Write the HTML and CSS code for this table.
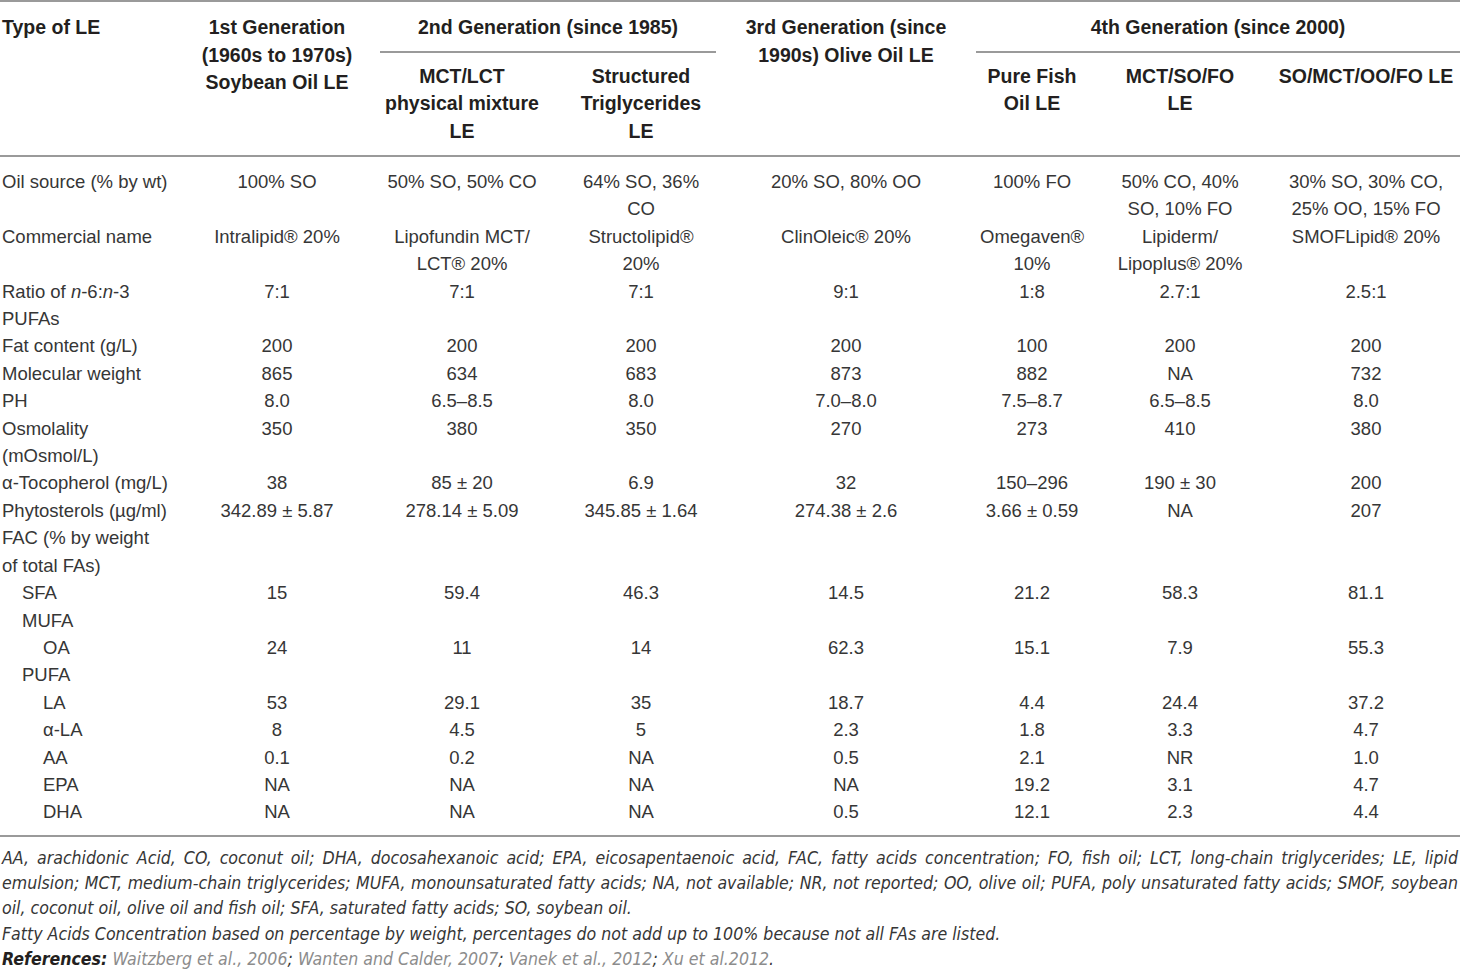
FILE: index.html
```html
<!DOCTYPE html>
<html lang="en">
<head>
<meta charset="utf-8">
<title>Lipid emulsions</title>
<link rel="stylesheet" href="styles.css">
</head>
<body>
<table class="le">
  <colgroup>
    <col class="c1"><col class="c2"><col class="c3"><col class="c4"><col class="c5"><col class="c6"><col class="c7"><col class="c8">
  </colgroup>
  <thead>
    <tr class="h1">
      <th class="lbl span" rowspan="2">Type of LE</th>
      <th class="span" rowspan="2">1st Generation<br>(1960s to 1970s)<br>Soybean Oil LE</th>
      <th class="grp" colspan="2"><div class="grp-label g2">2nd Generation (since 1985)</div></th>
      <th class="span" rowspan="2">3rd Generation (since<br>1990s) Olive Oil LE</th>
      <th class="grp" colspan="3"><div class="grp-label g4">4th Generation (since 2000)</div></th>
    </tr>
    <tr class="h2">
      <th>MCT/LCT<br>physical mixture<br>LE</th>
      <th>Structured<br>Triglycerides<br>LE</th>
      <th>Pure Fish<br>Oil LE</th>
      <th>MCT/SO/FO<br>LE</th>
      <th>SO/MCT/OO/FO LE</th>
    </tr>
  </thead>
  <tbody>
    <tr><td class="lbl">Oil source (% by wt)</td><td>100% SO</td><td>50% SO, 50% CO</td><td>64% SO, 36%<br>CO</td><td>20% SO, 80% OO</td><td>100% FO</td><td>50% CO, 40%<br>SO, 10% FO</td><td>30% SO, 30% CO,<br>25% OO, 15% FO</td></tr>
    <tr><td class="lbl">Commercial name</td><td>Intralipid® 20%</td><td>Lipofundin MCT/<br>LCT® 20%</td><td>Structolipid®<br>20%</td><td>ClinOleic® 20%</td><td>Omegaven®<br>10%</td><td>Lipiderm/<br>Lipoplus® 20%</td><td>SMOFLipid® 20%</td></tr>
    <tr><td class="lbl">Ratio of <i>n</i>-6:<i>n</i>-3<br>PUFAs</td><td>7:1</td><td>7:1</td><td>7:1</td><td>9:1</td><td>1:8</td><td>2.7:1</td><td>2.5:1</td></tr>
    <tr><td class="lbl">Fat content (g/L)</td><td>200</td><td>200</td><td>200</td><td>200</td><td>100</td><td>200</td><td>200</td></tr>
    <tr><td class="lbl">Molecular weight</td><td>865</td><td>634</td><td>683</td><td>873</td><td>882</td><td>NA</td><td>732</td></tr>
    <tr><td class="lbl">PH</td><td>8.0</td><td>6.5–8.5</td><td>8.0</td><td>7.0–8.0</td><td>7.5–8.7</td><td>6.5–8.5</td><td>8.0</td></tr>
    <tr><td class="lbl">Osmolality<br>(mOsmol/L)</td><td>350</td><td>380</td><td>350</td><td>270</td><td>273</td><td>410</td><td>380</td></tr>
    <tr><td class="lbl">α-Tocopherol (mg/L)</td><td>38</td><td>85 ± 20</td><td>6.9</td><td>32</td><td>150–296</td><td>190 ± 30</td><td>200</td></tr>
    <tr><td class="lbl">Phytosterols (µg/ml)</td><td>342.89 ± 5.87</td><td>278.14 ± 5.09</td><td>345.85 ± 1.64</td><td>274.38 ± 2.6</td><td>3.66 ± 0.59</td><td>NA</td><td>207</td></tr>
    <tr><td class="lbl">FAC (% by weight<br>of total FAs)</td><td></td><td></td><td></td><td></td><td></td><td></td><td></td></tr>
    <tr><td class="lbl ind1">SFA</td><td>15</td><td>59.4</td><td>46.3</td><td>14.5</td><td>21.2</td><td>58.3</td><td>81.1</td></tr>
    <tr><td class="lbl ind1">MUFA</td><td></td><td></td><td></td><td></td><td></td><td></td><td></td></tr>
    <tr><td class="lbl ind2">OA</td><td>24</td><td>11</td><td>14</td><td>62.3</td><td>15.1</td><td>7.9</td><td>55.3</td></tr>
    <tr><td class="lbl ind1">PUFA</td><td></td><td></td><td></td><td></td><td></td><td></td><td></td></tr>
    <tr><td class="lbl ind2">LA</td><td>53</td><td>29.1</td><td>35</td><td>18.7</td><td>4.4</td><td>24.4</td><td>37.2</td></tr>
    <tr><td class="lbl ind2">α-LA</td><td>8</td><td>4.5</td><td>5</td><td>2.3</td><td>1.8</td><td>3.3</td><td>4.7</td></tr>
    <tr><td class="lbl ind2">AA</td><td>0.1</td><td>0.2</td><td>NA</td><td>0.5</td><td>2.1</td><td>NR</td><td>1.0</td></tr>
    <tr><td class="lbl ind2">EPA</td><td>NA</td><td>NA</td><td>NA</td><td>NA</td><td>19.2</td><td>3.1</td><td>4.7</td></tr>
    <tr><td class="lbl ind2">DHA</td><td>NA</td><td>NA</td><td>NA</td><td>0.5</td><td>12.1</td><td>2.3</td><td>4.4</td></tr>
  </tbody>
</table>
<div class="notes">
  <div class="jl">AA, arachidonic Acid, CO, coconut oil; DHA, docosahexanoic acid; EPA, eicosapentaenoic acid, FAC, fatty acids concentration; FO, fish oil; LCT, long-chain triglycerides; LE, lipid</div>
  <div class="jl">emulsion; MCT, medium-chain triglycerides; MUFA, monounsaturated fatty acids; NA, not available; NR, not reported; OO, olive oil; PUFA, poly unsaturated fatty acids; SMOF, soybean</div>
  <div>oil, coconut oil, olive oil and fish oil; SFA, saturated fatty acids; SO, soybean oil.</div>
  <div>Fatty Acids Concentration based on percentage by weight, percentages do not add up to 100% because not all FAs are listed.</div>
  <div><b>References:</b> <span class="ref">Waitzberg et al., 2006</span>; <span class="ref">Wanten and Calder, 2007</span>; <span class="ref">Vanek et al., 2012</span>; <span class="ref">Xu et al.2012</span>.</div>
</div>
</body>
</html>
```
FILE: styles.css
```css
html, body {
  margin: 0;
  padding: 0;
  background: #ffffff;
}

body {
  width: 1460px;
  font-family: "Liberation Sans", Arial, sans-serif;
  color: #363636;
}

.le {
  width: 1460px;
  table-layout: fixed;
  border-collapse: collapse;
  border-top: 2px solid #9a9a9a;
  border-bottom: 2px solid #9a9a9a;
}

.c1 { width: 196px; }
.c2 { width: 162px; }
.c3 { width: 208px; }
.c4 { width: 150px; }
.c5 { width: 260px; }
.c6 { width: 112px; }
.c7 { width: 184px; }
.c8 { width: 188px; }

.le thead {
  border-bottom: 2px solid #9a9a9a;
}

.le th {
  font-size: 19.5px;
  font-weight: bold;
  line-height: 27.5px;
  color: #231f20;
  text-align: center;
  vertical-align: top;
  white-space: nowrap;
  padding: 10px 4px 10px 4px;
}

.le .h1 th {
  padding-top: 12px;
  padding-bottom: 0;
}

.le .h1 th.span {
  padding-bottom: 10px;
}

.le th.grp {
  padding-left: 0;
  padding-right: 0;
}

.grp-label {
  padding-bottom: 9px;
  border-bottom: 2px solid #9a9a9a;
}

.g2 {
  margin-left: 22px;
}

.g4 {
  margin-left: 0;
}

.le th.lbl,
.le td.lbl {
  text-align: left;
  padding-left: 2px;
}

.le td {
  font-size: 18.5px;
  line-height: 27.4px;
  text-align: center;
  vertical-align: top;
  white-space: nowrap;
  padding: 0 4px;
}

.le tbody tr:first-child td {
  padding-top: 11px;
}

.le tbody tr:last-child td {
  padding-bottom: 9px;
}

.le td.ind1 {
  padding-left: 22px;
}

.le td.ind2 {
  padding-left: 43px;
}

.notes {
  padding: 9px 2px 0 2px;
  font-family: "Liberation Sans Narrow", "DejaVu Sans Condensed", "Liberation Sans", sans-serif;
  font-style: italic;
  font-size: 17.6px;
  line-height: 25.3px;
  color: #363636;
}

.notes .jl {
  text-align: justify;
  text-align-last: justify;
}

.notes b {
  color: #231f20;
}

.notes .ref {
  color: #8c8c8c;
}
```
